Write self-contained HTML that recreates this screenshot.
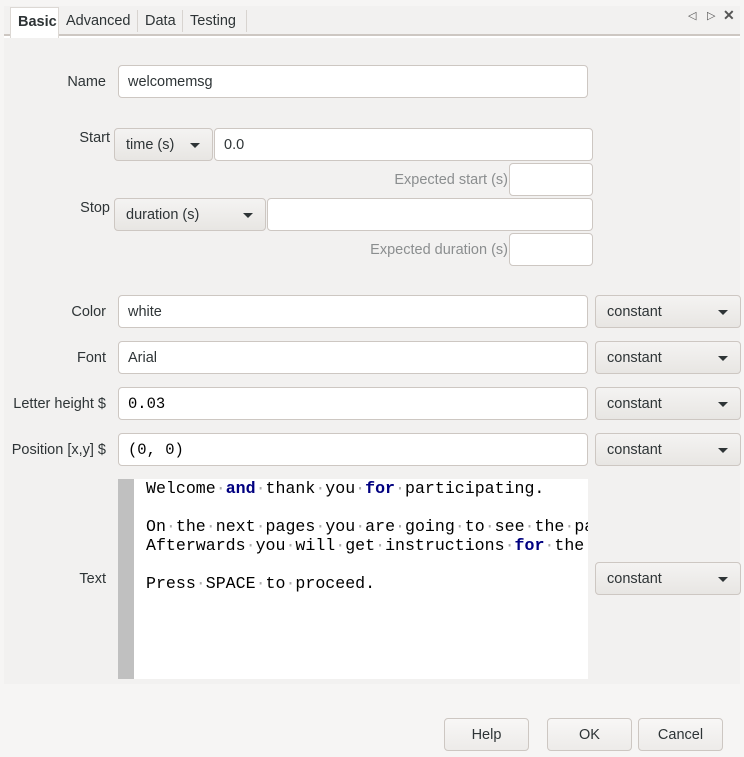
<!DOCTYPE html>
<html><head><style>
body{margin:0;width:744px;height:757px;background:#f6f5f4;font-family:"Liberation Sans",sans-serif;font-size:14.5px;color:#2e3436;position:relative;overflow:hidden}
.a{position:absolute;box-sizing:border-box}
.in{background:#fff;border:1px solid #cdc7c2;border-radius:4px;padding-left:9px;line-height:32px}
.btn{background:linear-gradient(#f4f3f2,#e8e6e3);border:1px solid #cdc7c2;border-radius:4px;padding-left:11px;line-height:32px}
.btn .ar{position:absolute;right:12px;top:14px;width:0;height:0;border-left:5px solid transparent;border-right:5px solid transparent;border-top:5px solid #2e3436}
.lb{text-align:right;line-height:20px}
.gr{color:#8b8e8f}
.mono{font-family:"Liberation Mono","DejaVu Sans Mono",monospace;font-size:16.6px;line-height:19px;white-space:pre;color:#000}
.k{color:#000080;font-weight:bold}
.d{color:#aaa}
.pb{background:linear-gradient(#f8f7f6,#edebe9);border:1px solid #cdc7c2;border-radius:4px;text-align:center;line-height:32px}
</style></head><body>
<div class="a" style="left:4px;top:6px;width:736px;height:678px;background:#f2f1f0"></div>
<div class="a" style="left:4px;top:34px;width:736px;height:2px;background:#cdc7c2"></div>
<div class="a" style="left:4px;top:36px;width:736px;height:2px;background:#fff"></div>
<div class="a" style="left:10px;top:7px;width:49px;height:31px;background:#fff;border:1px solid #dcd8d4;border-bottom:none;font-weight:bold;line-height:28px;padding-left:7px">Basic</div>
<div class="a" style="left:66px;top:7px;line-height:28px">Advanced</div>
<div class="a" style="left:137px;top:10px;width:1px;height:22px;background:#d8d4d0"></div>
<div class="a" style="left:145px;top:7px;line-height:28px">Data</div>
<div class="a" style="left:182px;top:10px;width:1px;height:22px;background:#d8d4d0"></div>
<div class="a" style="left:190px;top:7px;line-height:28px">Testing</div>
<div class="a" style="left:246px;top:10px;width:1px;height:22px;background:#d8d4d0"></div>
<div class="a" style="left:688px;top:9px;font-size:11px;color:#555">◁</div>
<div class="a" style="left:707px;top:9px;font-size:11px;color:#555">▷</div>
<div class="a" style="left:723px;top:7px;font-size:14px;color:#555;font-weight:bold">✕</div>

<div class="a lb" style="left:0;width:106px;top:72px">Name</div>
<div class="a in" style="left:118px;top:65px;width:470px;height:33px">welcomemsg</div>

<div class="a lb" style="left:0;width:110px;top:128px">Start</div>
<div class="a btn" style="left:114px;top:128px;width:99px;height:33px">time (s)<span class="ar"></span></div>
<div class="a in" style="left:214px;top:128px;width:379px;height:33px">0.0</div>
<div class="a lb gr" style="left:300px;width:208px;top:170px">Expected start (s)</div>
<div class="a in" style="left:509px;top:163px;width:84px;height:33px"></div>

<div class="a lb" style="left:0;width:110px;top:198px">Stop</div>
<div class="a btn" style="left:114px;top:198px;width:152px;height:33px">duration (s)<span class="ar"></span></div>
<div class="a in" style="left:267px;top:198px;width:326px;height:33px"></div>
<div class="a lb gr" style="left:300px;width:208px;top:240px">Expected duration (s)</div>
<div class="a in" style="left:509px;top:233px;width:84px;height:33px"></div>

<div class="a lb" style="left:0;width:106px;top:302px">Color</div>
<div class="a in" style="left:118px;top:295px;width:470px;height:33px">white</div>
<div class="a btn" style="left:595px;top:295px;width:146px;height:33px">constant<span class="ar"></span></div>

<div class="a lb" style="left:0;width:106px;top:348px">Font</div>
<div class="a in" style="left:118px;top:341px;width:470px;height:33px">Arial</div>
<div class="a btn" style="left:595px;top:341px;width:146px;height:33px">constant<span class="ar"></span></div>

<div class="a lb" style="left:0;width:106px;top:394px">Letter height $</div>
<div class="a in" style="left:118px;top:387px;width:470px;height:33px"><span class="mono" style="font-size:15.5px">0.03</span></div>
<div class="a btn" style="left:595px;top:387px;width:146px;height:33px">constant<span class="ar"></span></div>

<div class="a lb" style="left:0;width:106px;top:440px">Position [x,y] $</div>
<div class="a in" style="left:118px;top:433px;width:470px;height:33px"><span class="mono" style="font-size:15.5px">(0, 0)</span></div>
<div class="a btn" style="left:595px;top:433px;width:146px;height:33px">constant<span class="ar"></span></div>

<div class="a lb" style="left:0;width:106px;top:569px">Text</div>
<div class="a" style="left:118px;top:479px;width:16px;height:200px;background:#c0c0c0"></div>
<div class="a" style="left:134px;top:479px;width:454px;height:200px;background:#fff;overflow:hidden">
<div class="mono" style="position:absolute;left:12px;top:0">Welcome<span class="d">·</span><span class="k">and</span><span class="d">·</span>thank<span class="d">·</span>you<span class="d">·</span><span class="k">for</span><span class="d">·</span>participating.

On<span class="d">·</span>the<span class="d">·</span>next<span class="d">·</span>pages<span class="d">·</span>you<span class="d">·</span>are<span class="d">·</span>going<span class="d">·</span>to<span class="d">·</span>see<span class="d">·</span>the<span class="d">·</span>pa
Afterwards<span class="d">·</span>you<span class="d">·</span>will<span class="d">·</span>get<span class="d">·</span>instructions<span class="d">·</span><span class="k">for</span><span class="d">·</span>the

Press<span class="d">·</span>SPACE<span class="d">·</span>to<span class="d">·</span>proceed.</div></div>
<div class="a btn" style="left:595px;top:562px;width:146px;height:33px">constant<span class="ar"></span></div>

<div class="a pb" style="left:444px;top:718px;width:85px;height:33px">Help</div>
<div class="a pb" style="left:547px;top:718px;width:85px;height:33px">OK</div>
<div class="a pb" style="left:638px;top:718px;width:85px;height:33px">Cancel</div>
</body></html>
